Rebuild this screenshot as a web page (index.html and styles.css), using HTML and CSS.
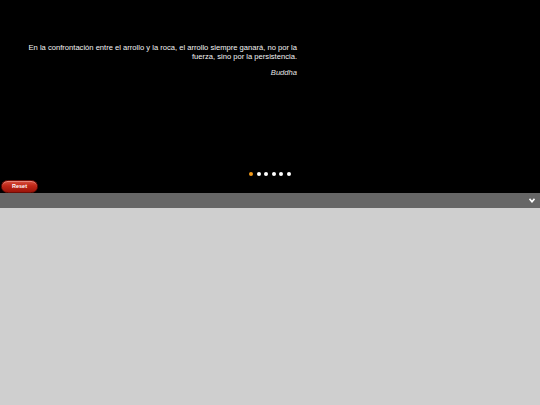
FILE: index.html
```html
<!DOCTYPE html>
<html>
<head>
<meta charset="utf-8">
<link rel="stylesheet" href="styles.css">
</head>
<body>
<div class="stage">
  <div class="quote">
    <p class="text">En la confrontación entre el arrollo y la roca, el arrollo siempre ganará, no por la fuerza, sino por la persistencia.</p>
    <p class="author">Buddha</p>
  </div>
  <div class="spacer"></div>
  <div class="dots">
    <span class="dot active"></span><span class="dot"></span><span class="dot"></span><span class="dot"></span><span class="dot"></span><span class="dot"></span>
  </div>
  <div class="reset-row"><button class="reset">Reset</button></div>
</div>
<div class="bar">
  <svg class="chev" width="6" height="5" viewBox="0 0 6 5"><path d="M0.5 0.8 L3 3.8 L5.5 0.8" fill="none" stroke="#fff" stroke-width="1.6"/></svg>
</div>
<div class="rest"></div>
</body>
</html>
```

FILE: styles.css
```css
html, body {
  margin: 0;
  padding: 0;
  background: #cfcfcf;
  font-family: "Liberation Sans", Arial, sans-serif;
}
.stage {
  background: #000;
  height: 193px;
  display: flex;
  flex-direction: column;
}
.quote {
  margin: 43px 0 0 23px;
  width: 274px;
  text-align: right;
  color: #f4f4f4;
  font-size: 7.6px;
  line-height: 9px;
}
.quote p { margin: 0; }
.quote .author {
  margin-top: 7px;
  font-style: italic;
  color: #e6e6e6;
}
.spacer { flex: 1; }
.dots {
  display: flex;
  justify-content: center;
  gap: 3.6px;
  height: 4px;
  margin-bottom: 4px;
}
.dot {
  width: 4px;
  height: 4px;
  border-radius: 50%;
  background: #fff;
}
.dot.active { background: #f29a1a; }
.reset-row {
  height: 13px;
  display: flex;
  padding-left: 1px;
}
.reset {
  width: 37px;
  height: 13px;
  border: 1px solid #6e0c05;
  border-radius: 6.5px;
  background: linear-gradient(#d9503f 0%, #c02617 45%, #9c1409 100%);
  box-shadow: inset 0 1px 0 rgba(255,255,255,0.3);
  color: #fff;
  font-family: "Liberation Sans", Arial, sans-serif;
  font-weight: bold;
  font-size: 5.5px;
  padding: 0;
  line-height: 11px;
}
.bar {
  height: 15px;
  background: #666;
  display: flex;
  align-items: center;
  justify-content: flex-end;
  padding-right: 5px;
}
.chev { display: block; }
```
